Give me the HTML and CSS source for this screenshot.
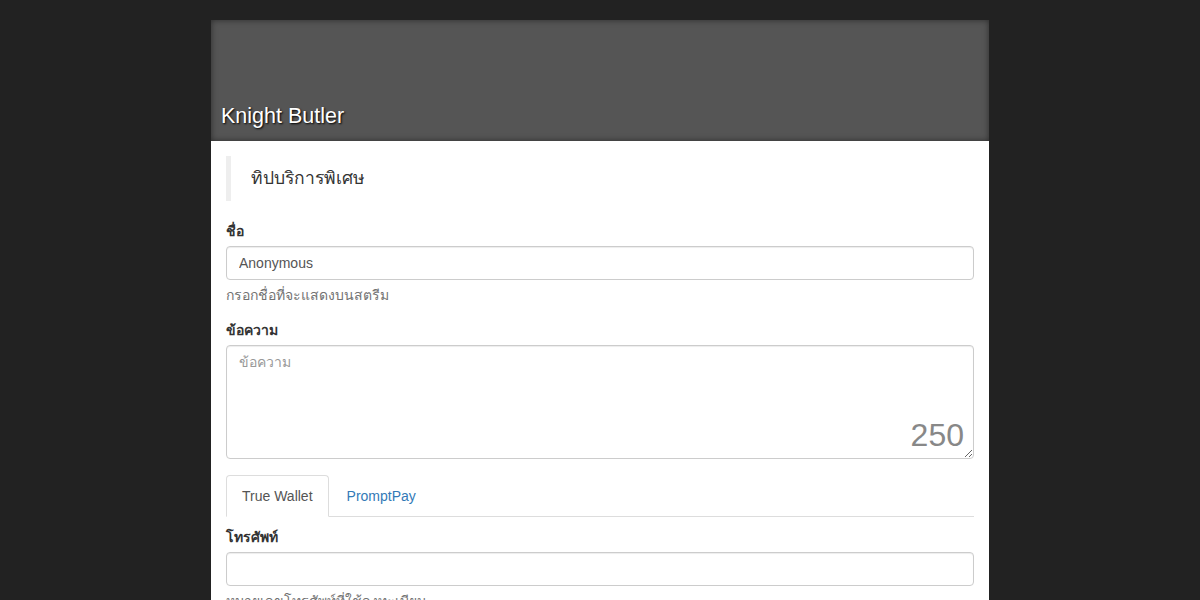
FILE: index.html
```html
<!DOCTYPE html>
<html lang="th">
<head>
<meta charset="utf-8">
<title>Knight Butler</title>
<link rel="stylesheet" href="styles.css">
</head>
<body>
<div class="container">
  <header class="banner">
    <h1 class="banner-title">Knight Butler</h1>
  </header>
  <main class="content">
    <blockquote class="quote">ทิปบริการพิเศษ</blockquote>
    <div class="form-group">
      <label class="label">ชื่อ</label>
      <input class="form-control" type="text" value="Anonymous">
      <p class="help">กรอกชื่อที่จะแสดงบนสตรีม</p>
    </div>
    <div class="form-group form-group-text">
      <label class="label">ข้อความ</label>
      <div class="textarea-wrap">
        <textarea class="form-control textarea" placeholder="ข้อความ"></textarea>
        <span class="counter">250</span>
      </div>
    </div>
    <ul class="tabs">
      <li class="tab active"><a class="tab-link">True Wallet</a></li>
      <li class="tab"><a class="tab-link">PromptPay</a></li>
    </ul>
    <div class="tab-content">
      <div class="form-group">
        <label class="label">โทรศัพท์</label>
        <input class="form-control" type="text">
        <p class="help">หมายเลขโทรศัพท์ที่ใช้ลงทะเบียน</p>
      </div>
    </div>
  </main>
</div>
</body>
</html>
```
FILE: styles.css
```css
* { box-sizing: border-box; }
html, body { margin: 0; padding: 0; }
body {
  background: #222222;
  font-family: "Liberation Sans", "Noto Sans", sans-serif;
  font-size: 14px;
  line-height: 20px;
  color: #333333;
  padding-top: 20px;
}
.container {
  width: 778px;
  margin: 0 auto 0 211px;
  background: #ffffff;
}
.banner {
  height: 121px;
  background: #555555;
  box-shadow: inset 0 0 6px rgba(0,0,0,0.5);
  display: flex;
  align-items: flex-end;
  padding: 0 10px 12px;
}
.banner-title {
  margin: 0;
  font-weight: normal;
  font-size: 21.5px;
  line-height: 26px;
  color: #ffffff;
  text-shadow: 1px 1px 2px #000000;
}
.content {
  padding: 15px 15px 20px;
}
.quote {
  margin: 0 0 20px;
  padding: 10px 20px;
  border-left: 5px solid #eeeeee;
  font-size: 17.5px;
  line-height: 25px;
}
.form-group { margin-bottom: 15px; }
.form-group-text { margin-bottom: 16px; }
.label {
  display: block;
  font-weight: bold;
  margin-bottom: 5px;
}
.form-control {
  display: block;
  width: 100%;
  height: 34px;
  padding: 6px 12px;
  font-family: inherit;
  font-size: 14px;
  line-height: 20px;
  color: #555555;
  background: #ffffff;
  border: 1px solid #cccccc;
  border-radius: 4px;
  box-shadow: inset 0 1px 1px rgba(0,0,0,0.075);
  margin: 0;
}
.help {
  margin: 5px 0 0;
  color: #737373;
}
.textarea-wrap { position: relative; }
.textarea {
  height: 114px;
  resize: vertical;
}
.textarea::placeholder { color: #999999; }
.counter {
  position: absolute;
  right: 10px;
  bottom: 4px;
  font-size: 32px;
  line-height: 40px;
  color: #888888;
}
.tabs {
  list-style: none;
  margin: 0;
  padding: 0;
  display: flex;
  border-bottom: 1px solid #dddddd;
}
.tab { margin-bottom: -1px; margin-right: 2px; }
.tab-link {
  display: block;
  padding: 10px 15px;
  line-height: 20px;
  border: 1px solid transparent;
  border-radius: 4px 4px 0 0;
  color: #337ab7;
}
.tab.active .tab-link {
  color: #555555;
  border-color: #dddddd;
  border-bottom-color: #ffffff;
}
.tab-content { padding-top: 10px; }
```
